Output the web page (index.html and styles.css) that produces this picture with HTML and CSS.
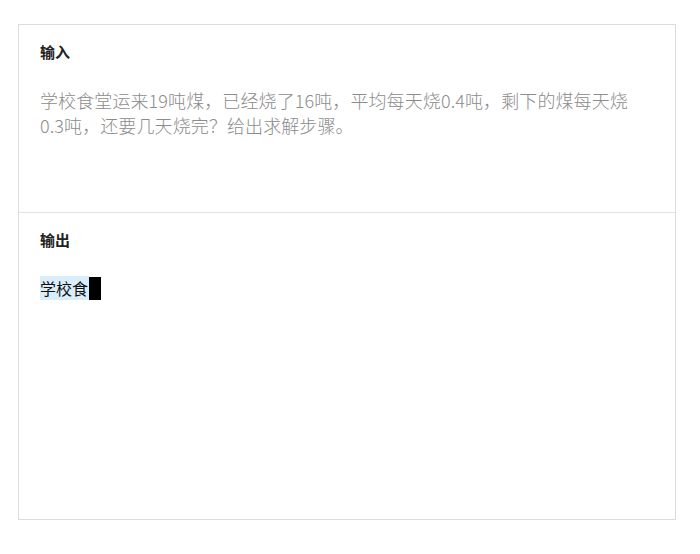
FILE: index.html
```html
<!DOCTYPE html>
<html lang="zh">
<head>
<meta charset="utf-8">
<link rel="stylesheet" href="styles.css">
</head>
<body>
<div class="panel">
  <section class="sec sec-in">
    <div class="label">输入</div>
    <div class="input-text">学校食堂运来19吨煤，已经烧了16吨，平均每天烧0.4吨，剩下的煤每天烧0.3吨，还要几天烧完？给出求解步骤。</div>
  </section>
  <section class="sec sec-out">
    <div class="label">输出</div>
    <div class="output-text"><span class="sel">学校食</span><span class="cursor"></span></div>
  </section>
</div>
</body>
</html>
```
FILE: styles.css
```css
html, body {
  margin: 0;
  padding: 0;
  background: #fff;
}
body {
  font-family: "Noto Sans CJK SC", "Noto Sans", sans-serif;
  padding: 24px 0 0 18px;
}
.panel {
  width: 656px;
  height: 494px;
  border: 1px solid #dcdcdc;
  display: flex;
  flex-direction: column;
}
.sec {
  padding: 0 21px;
}
.sec-in {
  height: 187px;
  border-bottom: 1px solid #e2e2e2;
}
.sec-out {
  flex: 1;
}
.label {
  font-size: 15px;
  font-weight: 600;
  color: #222;
  line-height: 20px;
  margin-top: 17px;
}
.input-text {
  margin-top: 26px;
  font-size: 18px;
  font-weight: 300;
  line-height: 25px;
  color: #8c8c8c;
  width: 600px;
  letter-spacing: 0.1px;
}
.output-text {
  margin-top: 26px;
  font-size: 16px;
  line-height: 24px;
  color: #111;
  display: flex;
  align-items: center;
}
.sel {
  background: #d9eefa;
  padding-right: 1px;
}
.cursor {
  display: inline-block;
  width: 12px;
  height: 23px;
  background: #000;
}
```
